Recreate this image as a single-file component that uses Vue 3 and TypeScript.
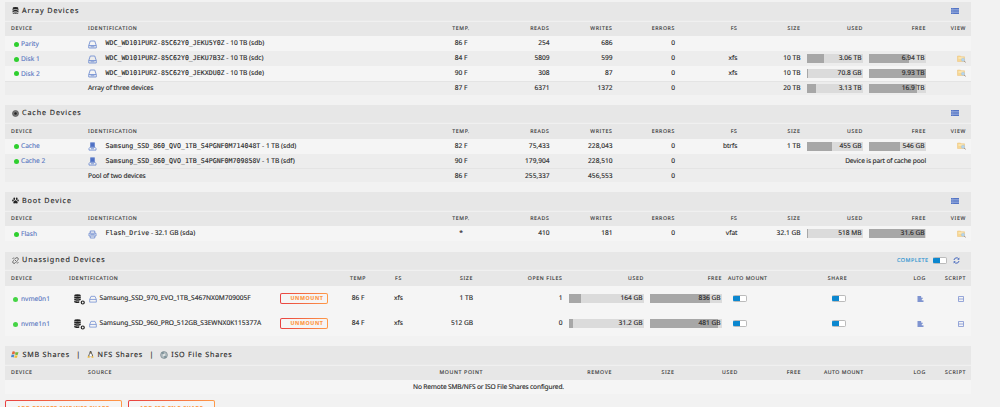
<script setup lang="ts">
interface Row {
  name?: string
  icon?: 'disk' | 'ssd' | 'usb'
  id: string
  extra?: string
  temp: string
  reads: string
  writes: string
  fs?: string
  size?: string
  used?: string
  usedPct?: number
  free?: string
  freePct?: number
  note?: string
}
interface Group {
  key: string
  title: string
  rows: Row[]
}

const groups: Group[] = [
  {
    key: 'array',
    title: 'Array Devices',
    rows: [
      { name: 'Parity', icon: 'disk', id: 'WDC_WD101PURZ-85C62Y0_JEKU5Y0Z', extra: ' - 10 TB (sdb)', temp: '86 F', reads: '254', writes: '686' },
      { name: 'Disk 1', icon: 'disk', id: 'WDC_WD101PURZ-85C62Y0_JEKU7B3Z', extra: ' - 10 TB (sdc)', temp: '84 F', reads: '5809', writes: '599', fs: 'xfs', size: '10 TB', used: '3.06 TB', usedPct: 31, free: '6.94 TB', freePct: 69.5 },
      { name: 'Disk 2', icon: 'disk', id: 'WDC_WD101PURZ-85C62Y0_JEKXDU0Z', extra: ' - 10 TB (sde)', temp: '90 F', reads: '308', writes: '87', fs: 'xfs', size: '10 TB', used: '70.8 GB', usedPct: 1, free: '9.93 TB', freePct: 99.3 },
      { id: 'Array of three devices', temp: '87 F', reads: '6371', writes: '1372', size: '20 TB', used: '3.13 TB', usedPct: 16, free: '16.9 TB', freePct: 84.5 },
    ],
  },
  {
    key: 'cache',
    title: 'Cache Devices',
    rows: [
      { name: 'Cache', icon: 'ssd', id: 'Samsung_SSD_860_QVO_1TB_S4PGNF0M714048T', extra: ' - 1 TB (sdd)', temp: '82 F', reads: '75,433', writes: '228,043', fs: 'btrfs', size: '1 TB', used: '455 GB', usedPct: 45, free: '546 GB', freePct: 55 },
      { name: 'Cache 2', icon: 'ssd', id: 'Samsung_SSD_860_QVO_1TB_S4PGNF0M709858V', extra: ' - 1 TB (sdf)', temp: '90 F', reads: '179,904', writes: '228,510', note: 'Device is part of cache pool' },
      { id: 'Pool of two devices', temp: '86 F', reads: '255,337', writes: '456,553' },
    ],
  },
  {
    key: 'boot',
    title: 'Boot Device',
    rows: [
      { name: 'Flash', icon: 'usb', id: 'Flash_Drive', extra: ' - 32.1 GB (sda)', temp: '*', reads: '410', writes: '181', fs: 'vfat', size: '32.1 GB', used: '518 MB', usedPct: 1.5, free: '31.6 GB', freePct: 98.4 },
    ],
  },
]

const unassigned = [
  { name: 'nvme0n1', id: 'Samsung_SSD_970_EVO_1TB_S467NX0M709005F', temp: '86 F', size: '1 TB', open: '1', used: '164 GB', usedPct: 16, free: '836 GB', freePct: 83.6 },
  { name: 'nvme1n1', id: 'Samsung_SSD_960_PRO_512GB_S3EWNX0K115377A', temp: '84 F', size: '512 GB', open: '0', used: '31.2 GB', usedPct: 6.5, free: '481 GB', freePct: 94 },
]
</script>

<template>
  <main class="page">
    <section v-for="g in groups" :key="g.key" class="panel" :class="g.key">
      <header class="title">
        <svg v-if="g.key === 'array'" class="ticon" viewBox="0 0 14 14">
          <ellipse cx="7" cy="2.4" rx="6" ry="2.2" />
          <path d="M1 4c2 2 10 2 12 0v2.3c-2 2-10 2-12 0zM1 7.5c2 2 10 2 12 0v2.1c-2 2-10 2-12 0zM1 10.8c2 2 10 2 12 0v1.2c-2 2.4-10 2.4-12 0z" />
        </svg>
        <svg v-else-if="g.key === 'cache'" class="ticon" viewBox="0 0 14 14">
          <circle cx="7" cy="7" r="6" fill="#777" stroke="#555" stroke-width="1.4" />
          <circle cx="7" cy="7" r="2.5" fill="#222" />
        </svg>
        <svg v-else class="ticon" viewBox="0 0 14 14">
          <ellipse cx="4.5" cy="3.5" rx="1.7" ry="2.4" /><ellipse cx="9.5" cy="3.5" rx="1.7" ry="2.4" />
          <ellipse cx="1.9" cy="7" rx="1.6" ry="2.1" /><ellipse cx="12.1" cy="7" rx="1.6" ry="2.1" />
          <path d="M7 6.3c2 0 4.6 3.3 4.4 5.1-.2 2.2-2.7 1.3-4.4 1.3s-4.2.9-4.4-1.3C2.4 9.6 5 6.3 7 6.3z" />
        </svg>
        <h2>{{ g.title }}</h2>
        <svg class="list" viewBox="0 0 16 12">
          <rect width="16" height="12" fill="#9fb2df" />
          <path d="M0 1.5h16M0 6h16M0 10.5h16" stroke="#3d62bd" stroke-width="2.2" />
          <path d="M3.5 0v12" stroke="#8fa5da" />
        </svg>
      </header>
      <div class="row head main">
        <span>Device</span><span>Identification</span><span class="c">Temp.</span><span class="r">Reads</span>
        <span class="r">Writes</span><span class="r">Errors</span><span class="r">FS</span><span class="r">Size</span>
        <span class="r">Used</span><span class="r">Free</span><span class="r">View</span>
      </div>
      <div v-for="row in g.rows" :key="row.id" class="row main" :class="{ total: !row.name }">
        <span class="dev"><template v-if="row.name"><i class="dot" /><a>{{ row.name }}</a></template></span>
        <span class="ident">
          <svg v-if="row.icon === 'disk'" class="dicon" viewBox="0 0 18 18">
            <path d="M4.500 2h9l3 9v5h-15v-5zM1.500 11h15M5 13.500h8" />
          </svg>
          <svg v-else-if="row.icon === 'ssd'" class="dicon" viewBox="0 0 18 18">
            <path class="solid" d="M5 1.500h8V10H5z" />
            <path d="M4 10.500 2 13v3.200h14V13l-2-2.500zM6 13.500h6" />
          </svg>
          <svg v-else-if="row.icon === 'usb'" class="dicon" viewBox="0 0 18 18">
            <path d="M4.500 6V2h9v4M2 6.500h14V12H2zM4.500 12.500V16h9v-3.500M4.500 9.300h9" />
          </svg>
          <template v-if="row.name"><b>{{ row.id }}</b><em>{{ row.extra }}</em></template>
          <span v-else class="tight">{{ row.id }}</span>
        </span>
        <span class="c">{{ row.temp }}</span><span class="r">{{ row.reads }}</span><span class="r">{{ row.writes }}</span>
        <span class="r">0</span>
        <span v-if="row.note" class="note">{{ row.note }}</span>
        <template v-else>
          <span class="r">{{ row.fs }}</span><span class="r">{{ row.size }}</span>
          <span class="cell"><span v-if="row.used" class="bar"><i :style="{ width: row.usedPct + '%' }" /><u>{{ row.used }}</u></span></span>
          <span class="cell"><span v-if="row.free" class="bar"><i :style="{ width: row.freePct + '%' }" /><u>{{ row.free }}</u></span></span>
          <span class="r view">
            <svg v-if="row.fs" viewBox="0 0 18 16">
              <path d="M1 2h6l1.500 1.500H15V13H1z" fill="#f6d793" stroke="#ecc07a" />
              <path d="M3 5h10v2H3z" fill="#fff0cc" />
              <circle cx="12" cy="9.500" r="3.200" fill="#b5d6f0" stroke="#a5c2dc" />
              <path d="m14.500 12 2.800 3" stroke="#a08c80" stroke-width="2" />
            </svg>
          </span>
        </template>
      </div>
    </section>

    <section class="panel unassigned">
      <header class="title">
        <svg class="ticon" viewBox="0 0 14 14">
          <path class="chain" d="M6 3.500 8 1.800c3-2 6 1.500 4 4L10.500 7.500M3.500 6.500 2 8.200c-2 3 1.500 6 4 4L7.500 10.500M5 5l4.500 4.500M1 3l2 .7M3.500 1l.7 2M13 11l-2-.7M10.500 13l-.7-2" />
        </svg>
        <h2>Unassigned Devices</h2>
        <span class="complete">Complete</span>
        <i class="toggle" />
        <svg class="refresh" viewBox="0 0 14 14" fill="none" stroke="#4668bd" stroke-width="2">
          <path d="M2 6a5.200 5.200 0 0 1 9.500-2M12 8a5.200 5.200 0 0 1-9.500 2" />
          <path d="M12.700 1v4.500H8.500zM1.300 13V8.500h4.200z" fill="#4668bd" stroke="none" />
        </svg>
      </header>
      <div class="row head un">
        <span>Device</span><span>Identification</span><span /><span class="c">Temp</span><span class="c">FS</span>
        <span class="r">Size</span><span class="r">Open files</span><span class="r">Used</span><span class="r">Free</span>
        <span class="auto am">Auto mount</span><span class="c">Share</span><span class="r">Log</span><span class="r">Script</span>
      </div>
      <div v-for="d in unassigned" :key="d.name" class="row un">
        <span class="dev"><i class="dot" /><a>{{ d.name }}</a></span>
        <span class="uident">
          <svg class="db" viewBox="0 0 22 22">
            <ellipse cx="7" cy="3" rx="6.500" ry="2.300" />
            <path d="M.5 4.500c2 2 11 2 13 0V8c-2 2-11 2-13 0zM.5 9.200c2 2 11 2 13 0V12c-2 2-11 2-13 0zM.5 13.200c2 2 8 2 10 1.500v3c-3 .8-8 .7-10-1z" />
            <circle cx="17.500" cy="17" r="3" fill="#f5f5f5" stroke="#222" stroke-width="2.400" />
          </svg>
          <svg class="udisk" viewBox="0 0 18 18"><path d="M4.500 3h9l3 7v6h-15v-6zM1.500 10h15" /></svg>
          <span>{{ d.id }}</span>
        </span>
        <span><button class="btn unmount">Unmount</button></span>
        <span class="c">{{ d.temp }}</span><span class="c">xfs</span><span class="r">{{ d.size }}</span><span class="r">{{ d.open }}</span>
        <span class="cell"><span class="bar"><i :style="{ width: d.usedPct + '%' }" /><u>{{ d.used }}</u></span></span>
        <span class="cell"><span class="bar"><i :style="{ width: d.freePct + '%' }" /><u>{{ d.free }}</u></span></span>
        <span class="auto"><i class="toggle" /></span>
        <span class="sh"><i class="toggle" /></span>
        <span class="r"><svg class="log" viewBox="0 0 14 14"><path d="M0 2h8.500M0 5.300h12M0 8.600h10M0 12h14" /></svg></span>
        <span class="r"><svg class="script" viewBox="0 0 12 12"><path d="M1 1h10v10H1zM1 6h10" fill="none" stroke="#7f93d2" stroke-width="1.600" /></svg></span>
      </div>
    </section>

    <section class="panel shares">
      <header class="title">
        <svg class="ticon win" viewBox="0 0 16 14">
          <path d="M3 1q2.500-1 5 .5L7 7Q4.500 5.500 1.500 6.500z" fill="#e2683a" /><path d="M9 2q3 1.300 6 0l-1.500 5.500q-3 1-5.500-.3z" fill="#78b83c" />
          <path d="M1.200 7.500q2.500-1 5.300.3L5.300 13Q3 11.500 0 12.500z" fill="#4887cf" /><path d="M7.700 8.300q3 1.200 5.500.2L12 13.300q-2.500 1-5.500-.3z" fill="#f0bd35" />
        </svg>
        <h2>SMB Shares</h2><h2 class="sep">|</h2>
        <svg class="ticon tux" viewBox="0 0 14 14">
          <path d="M5 3c0-4 4.500-4 4.500 0 0 2 3 4.500 2.500 8H2.500C2 8 5 6 5 3z" fill="#555" />
          <path d="M5.500 5.500q2-.8 3.500 0l1.500 5.500h-6z" fill="#fff" />
          <path d="M1 11.500 3.500 9.500 6 13l-4.500.6zM13 11.500 10.500 9.500 8.500 13l4 .6zM6 3.500h2.500L7.300 5z" fill="#efb52d" />
        </svg>
        <h2>NFS Shares</h2><h2 class="sep">|</h2>
        <svg class="ticon iso" viewBox="0 0 16 16">
          <circle cx="8" cy="8" r="6.800" fill="#b4bfc3" stroke="#78878e" stroke-width="1.400" />
          <path d="M8 8 2 4a7 7 0 0 1 5-3zM8 8l6 4a7 7 0 0 1-5 3z" fill="#7d9198" /><circle cx="8" cy="8" r="2" fill="#eee" />
        </svg>
        <h2>ISO File Shares</h2>
      </header>
      <div class="row head rem">
        <span>Device</span><span>Source</span><span>Mount point</span><span class="r">Remove</span><span class="r">Size</span>
        <span class="r">Used</span><span class="r">Free</span><span class="r am">Auto mount</span><span class="r">Log</span><span class="r">Script</span>
      </div>
      <div class="row empty">No Remote SMB/NFS or ISO File Shares configured.</div>
    </section>

    <div class="actions">
      <button class="btn add smb">Add Remote SMB/NFS Share</button>
      <button class="btn add isof">Add ISO File Share</button>
    </div>
  </main>
</template>

<style>
html, body { background: #f2f2f2; overflow: hidden; }
</style>

<style scoped>
* { box-sizing: border-box; }
.page {
  width: 1000px; height: 407px; padding: 2px 29px 0 5px; overflow: hidden;
  font: 6.6px/1 "Noto Sans", "Open Sans", sans-serif; color: #262626; text-rendering: geometricPrecision;
  -webkit-text-stroke: .12px currentColor;
}
i, em { font-style: normal; }
b { font-weight: 400; }
u { text-decoration: none; }
svg { display: block; flex: none; }
.panel { height: 102.500px; }
.panel.cache { height: 87.500px; }
.panel.boot { height: 59.500px; }
.panel.unassigned { height: 94.500px; }
.panel.shares { height: 53.500px; }
.title {
  display: flex; align-items: center; height: 18.500px; padding: 0 12px 0 6.500px;
  background: #e7e7e7; border-bottom: 1px solid #e9e9e9;
}
.title h2 { margin: 0; padding-top: 1px; font-size: 7.200px; font-weight: 400; letter-spacing: .9px; white-space: pre; }
.ticon { width: 7px; height: 7px; margin-right: 3.500px; fill: #222; }
.chain { fill: none; stroke: #444; stroke-width: 1.500; }
.list { width: 8px; height: 6px; margin-left: auto; }
.complete { margin-left: auto; margin-right: 4px; padding-top: 1px; color: #2a93d1; font-size: 5.400px; letter-spacing: .5px; text-transform: uppercase; }
.unassigned .title { padding-right: 11.500px; }
.refresh { width: 7px; height: 7px; margin-left: 6px; }
.row { display: grid; align-items: center; height: 14.900px; padding: 0 5px 0 6px; background: #f5f5f5; white-space: pre; }
.row:nth-child(2n) { background: #ededed; }
.main { grid-template-columns: 77px 349px 48px 64.500px 63px 62.500px 62.500px 63px 62.500px 63px 40px; }
.main > *, .un > *, .rem > * { min-width: 0; }
.un { grid-template-columns: 58px 210.500px 58.500px 40px 41px 54px 89.500px 81.500px 78px 74px 83px 47px 40px; }
.rem { grid-template-columns: 77px 351.500px 85px 87.500px 62.500px 63.500px 63px 62.500px 62.500px 40px; }
.row.head {
  height: 15.700px; background: #e7e7e7; border-top: 1px solid #f0f0f0;
  font-size: 5.200px; letter-spacing: .65px; text-transform: uppercase; color: #363636;
}
.row.head .am { letter-spacing: .48px; }
.row.total { background: #ededed; border-top: 1px solid #e4e4e4; height: 14px; }
.row.un:not(.head) { height: 25px; background: #f5f5f5; padding-top: 1px; }
.c { text-align: center; }
.r { text-align: right; }
.r svg { margin-left: auto; }
.dev { display: flex; align-items: center; padding-top: 1px; }
.head .dev { padding-top: 0; }
.dot { width: 5px; height: 5px; margin: 0 5px 0 2.500px; border-radius: 50%; background: #2fcf2f; }
.un .dot { margin-left: 1.500px; margin-right: 3.500px; background: #45d445; }
.main .dot { margin-right: 2.500px; }
a { color: #5876c2; }
.ident { display: flex; align-items: center; }
.dicon, .udisk { width: 9px; height: 9px; margin-right: 8.500px; fill: none; stroke: #6e8bd0; stroke-width: 1.700; }
.dicon { margin-top: 1px; }
.dicon .solid { fill: #4f70c4; }
.ident b { font: 6.600px/1 "DejaVu Sans Mono", monospace; }
.tight { letter-spacing: -.09px; }
.cell { padding-left: 6px; }
.bar { display: block; position: relative; height: 9px; background: #dbdbdb; }
.bar i { display: block; height: 100%; background: #a7a7a7; }
.bar u { position: absolute; right: 1.500px; top: 1px; }
.note { grid-column: span 4; text-align: right; letter-spacing: -.13px; }
.view svg { width: 9px; height: 8px; fill: none; }
.uident { display: flex; align-items: center; padding-left: 5px; letter-spacing: .01px; }
.db { width: 11px; height: 11px; margin: 2px 3.500px 0 0; fill: #222; }
.udisk { width: 8px; height: 8px; margin-right: 3px; }
.toggle {
  display: block; width: 14px; height: 7px; border: 1px solid #bbb; border-radius: 2px; border-left-color: #0b87cf;
  background: linear-gradient(90deg, #0b87cf 50%, #fff 50%);
}
.auto { padding-left: 6px; }
.un .auto .toggle { margin-left: 4.500px; }
.sh .toggle { margin-left: 36px; }
.log { width: 7px; height: 6px; margin-right: 2px; fill: none; stroke: #5874c4; stroke-width: 2.600; }
.script { width: 6px; height: 6px; margin-right: 2.500px; }
.btn {
  display: block; height: 10.500px; padding: 0; border: 1px solid transparent; border-radius: 2px; color: #ff9640;
  background: linear-gradient(#f5f5f5, #f5f5f5) padding-box, linear-gradient(90deg, #e84040, #ff9a48) border-box;
  font: 700 5.300px/1 "Noto Sans", sans-serif; letter-spacing: .6px; text-transform: uppercase; white-space: nowrap;
}
.unmount { width: 48px; padding-left: 7px; }
.win { width: 8px; margin: 0 4px 0 -1px; }
.shares .title h2 { letter-spacing: .76px; padding-top: 2px; }
.shares .title h2.sep { padding: 1px 5.500px 0 6.500px; }
.tux { margin-right: 4px; }
.iso { width: 8px; height: 8px; }
.row.empty { height: 13.500px; background: #f5f5f5; text-align: center; display: block; line-height: 14.500px; letter-spacing: -.15px; }
.actions { display: flex; gap: 6px; }
.add { height: 18px; }
.smb { width: 117px; }
.isof { width: 87px; }
</style>
